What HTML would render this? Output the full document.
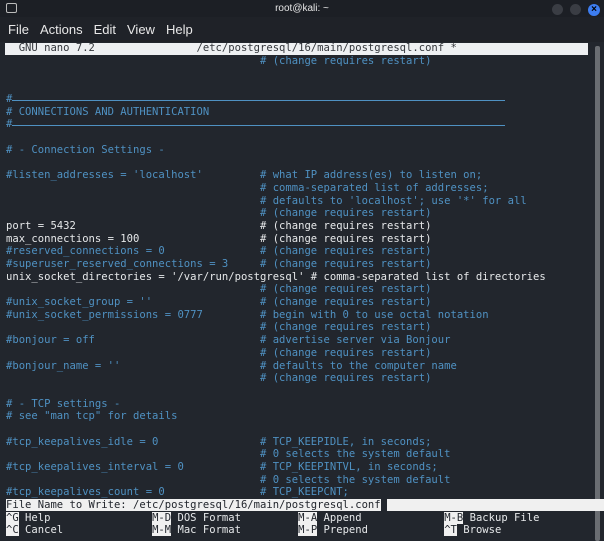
<!DOCTYPE html>
<html><head><meta charset="utf-8"><style>
body{margin:0;width:604px;height:541px;overflow:hidden;background:#22262d;font-family:"Liberation Sans",sans-serif;position:relative}
.title{position:absolute;left:0;top:0;width:604px;height:17px;background:#1c1f25;color:#e6e6e6;font-size:10px;text-align:center;line-height:17px}
.menu{position:absolute;left:0;top:17px;width:604px;height:25px;background:#1f2228;color:#e8e8e8;font-size:13px;line-height:25px}
.menu span{margin-left:8px;margin-right:3px}
pre{margin:0;position:absolute;left:6px;font-family:"DejaVu Sans Mono",monospace;font-size:10.55px;line-height:12.69px;white-space:pre}
.c{color:#4f91c2}.w{color:#e6e8ea}
.nano{position:absolute;left:5px;top:43px;width:583px;height:12px;background:#eef0f2}
.hl{background:#f0f0f0;color:#22262d}
.sb{position:absolute;left:595px;top:46px;width:5px;height:495px;background:#6a6d72;border-radius:2px}
.dash{position:absolute;left:12px;width:493px;border-top:1px solid #4f91c2}
</style></head><body>
<div class="title">root@kali: ~</div>
<div style="position:absolute;left:6px;top:3px;width:9px;height:8px;border:1px solid #bbb;border-radius:2px"></div>
<div style="position:absolute;left:552px;top:4px;width:11px;height:11px;border-radius:50%;background:#3a3d44"></div>
<div style="position:absolute;left:570px;top:4px;width:11px;height:11px;border-radius:50%;background:#3a3d44"></div>
<div style="position:absolute;left:588px;top:4px;width:12px;height:12px;border-radius:50%;background:#3d7df0;color:#000;font-size:10px;line-height:12px;text-align:center;font-weight:bold">×</div>
<div class="menu"><span>File</span><span>Actions</span><span>Edit</span><span>View</span><span>Help</span></div>
<div class="nano"></div>
<pre style="top:42px;color:#33363b">  GNU nano 7.2                /etc/postgresql/16/main/postgresql.conf *</pre>
<div class="sb"></div>
<div class="dash" style="top:100px"></div>
<div class="dash" style="top:125px"></div>
<pre style="top:55px"><span class="c">                                        # (change requires restart)


#
# CONNECTIONS AND AUTHENTICATION
#

# - Connection Settings -

#listen_addresses = 'localhost'         # what IP address(es) to listen on;
                                        # comma-separated list of addresses;
                                        # defaults to 'localhost'; use '*' for all
                                        # (change requires restart)</span>
<span class="w">port = 5432                             # (change requires restart)
max_connections = 100                   # (change requires restart)</span>
<span class="c">#reserved_connections = 0               # (change requires restart)
#superuser_reserved_connections = 3     # (change requires restart)</span>
<span class="w">unix_socket_directories = '/var/run/postgresql' # comma-separated list of directories</span>
<span class="c">                                        # (change requires restart)
#unix_socket_group = ''                 # (change requires restart)
#unix_socket_permissions = 0777         # begin with 0 to use octal notation
                                        # (change requires restart)
#bonjour = off                          # advertise server via Bonjour
                                        # (change requires restart)
#bonjour_name = ''                      # defaults to the computer name
                                        # (change requires restart)

# - TCP settings -
# see "man tcp" for details

#tcp_keepalives_idle = 0                # TCP_KEEPIDLE, in seconds;
                                        # 0 selects the system default
#tcp_keepalives_interval = 0            # TCP_KEEPINTVL, in seconds;
                                        # 0 selects the system default
#tcp_keepalives_count = 0               # TCP_KEEPCNT;</span>
<span class="hl">File Name to Write: /etc/postgresql/16/main/postgresql.conf</span><span style="background:#22262d"> </span><span class="hl">                                                                                    </span>
<span class="w"><span class="hl">^G</span> Help                <span class="hl">M-D</span> DOS Format         <span class="hl">M-A</span> Append             <span class="hl">M-B</span> Backup File
<span class="hl">^C</span> Cancel              <span class="hl">M-M</span> Mac Format         <span class="hl">M-P</span> Prepend            <span class="hl">^T</span> Browse</span></pre>
</body></html>
